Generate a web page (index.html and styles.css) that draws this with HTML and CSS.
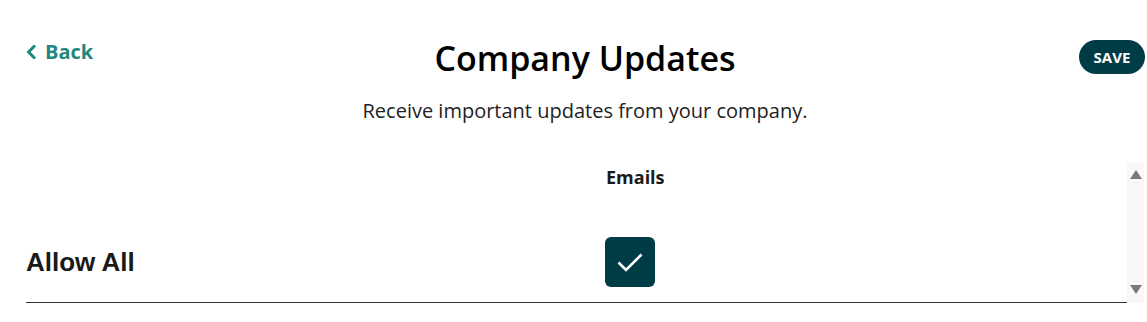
FILE: index.html
```html
<!DOCTYPE html>
<html lang="en">
<head>
    <meta charset="UTF-8">
    <title>Company Updates</title>
    <link rel="stylesheet" href="styles.css">
</head>
<body>
    <div class="page">
        <div class="top-bar">
            <a class="back-link" href="#">
                <svg viewBox="0 0 11 16" width="11" height="16">
                    <path d="M9 1.5 L2.6 8 L9 14.5" fill="none" stroke="currentColor" stroke-width="3"/>
                </svg>
                Back
            </a>
            <div class="heading">
                <h1 class="title">Company Updates</h1>
                <p class="subtitle">Receive important updates from your company.</p>
            </div>
            <button class="save-btn">SAVE</button>
        </div>

        <div class="prefs">
            <div class="pref-list">
                <div class="pref-row pref-head">
                    <div></div>
                    <div class="col-label">Emails</div>
                </div>
                <div class="pref-row pref-item">
                    <div class="pref-name">Allow All</div>
                    <div class="check">
                        <svg viewBox="0 0 30 30" width="30" height="30">
                            <path d="M3.5 15.5 L11 23 L26.5 7.5" fill="none" stroke="#fff" stroke-width="2.6"/>
                        </svg>
                    </div>
                </div>
            </div>
            <div class="scrollbar">
                <span class="arrow arrow-up"></span>
                <span class="arrow arrow-down"></span>
            </div>
        </div>
    </div>
</body>
</html>
```

FILE: styles.css
```css
* {
    margin: 0;
    padding: 0;
    box-sizing: border-box;
}

body {
    font-family: "Open Sans", sans-serif;
    color: #1a1a1a;
    background: #fff;
    overflow: hidden;
}

.page {
    padding: 0 3px 0 26px;
}

.top-bar {
    display: grid;
    grid-template-columns: 1fr auto 1fr;
    align-items: start;
    padding-top: 33px;
}

.back-link {
    display: flex;
    align-items: center;
    gap: 8px;
    color: #1f877d;
    font-weight: 700;
    font-size: 20px;
    text-decoration: none;
    margin-top: 5px;
}

.heading {
    text-align: center;
}

.title {
    font-size: 34px;
    font-weight: 600;
    color: #000;
    line-height: 50px;
}

.subtitle {
    font-size: 20px;
    color: #222;
    margin-top: 14px;
}

.save-btn {
    justify-self: end;
    margin-top: 7px;
    margin-right: -1px;
    width: 66px;
    height: 34px;
    border: none;
    border-radius: 17px;
    background: #003c45;
    color: #fff;
    font-family: "Open Sans", sans-serif;
    font-weight: 700;
    font-size: 15px;
}

.prefs {
    display: flex;
    margin-top: 39px;
    height: 140px;
}

.pref-list {
    flex: 1;
}

.pref-row {
    display: grid;
    grid-template-columns: 579px 1fr;
    align-items: center;
}

.pref-head {
    height: 59px;
    align-items: start;
    padding-top: 2px;
}

.col-label {
    font-weight: 700;
    font-size: 18px;
    padding-left: 1px;
}

.pref-item {
    height: 81px;
    border-bottom: 1px solid #333;
}

.pref-name {
    font-family: "Liberation Sans", Arial, sans-serif;
    font-weight: 700;
    font-size: 26px;
}

.check {
    width: 50px;
    height: 50px;
    border-radius: 6px;
    background: #003c45;
    display: flex;
    align-items: center;
    justify-content: center;
}

.scrollbar {
    width: 17px;
    background: #f8f8f8;
    display: flex;
    flex-direction: column;
    justify-content: space-between;
    align-items: center;
    padding: 7px 0 9px;
}

.arrow {
    width: 0;
    height: 0;
    border-left: 6px solid transparent;
    border-right: 6px solid transparent;
}

.arrow-up {
    border-bottom: 9px solid #7a7a7a;
}

.arrow-down {
    border-top: 9px solid #7a7a7a;
}
```
